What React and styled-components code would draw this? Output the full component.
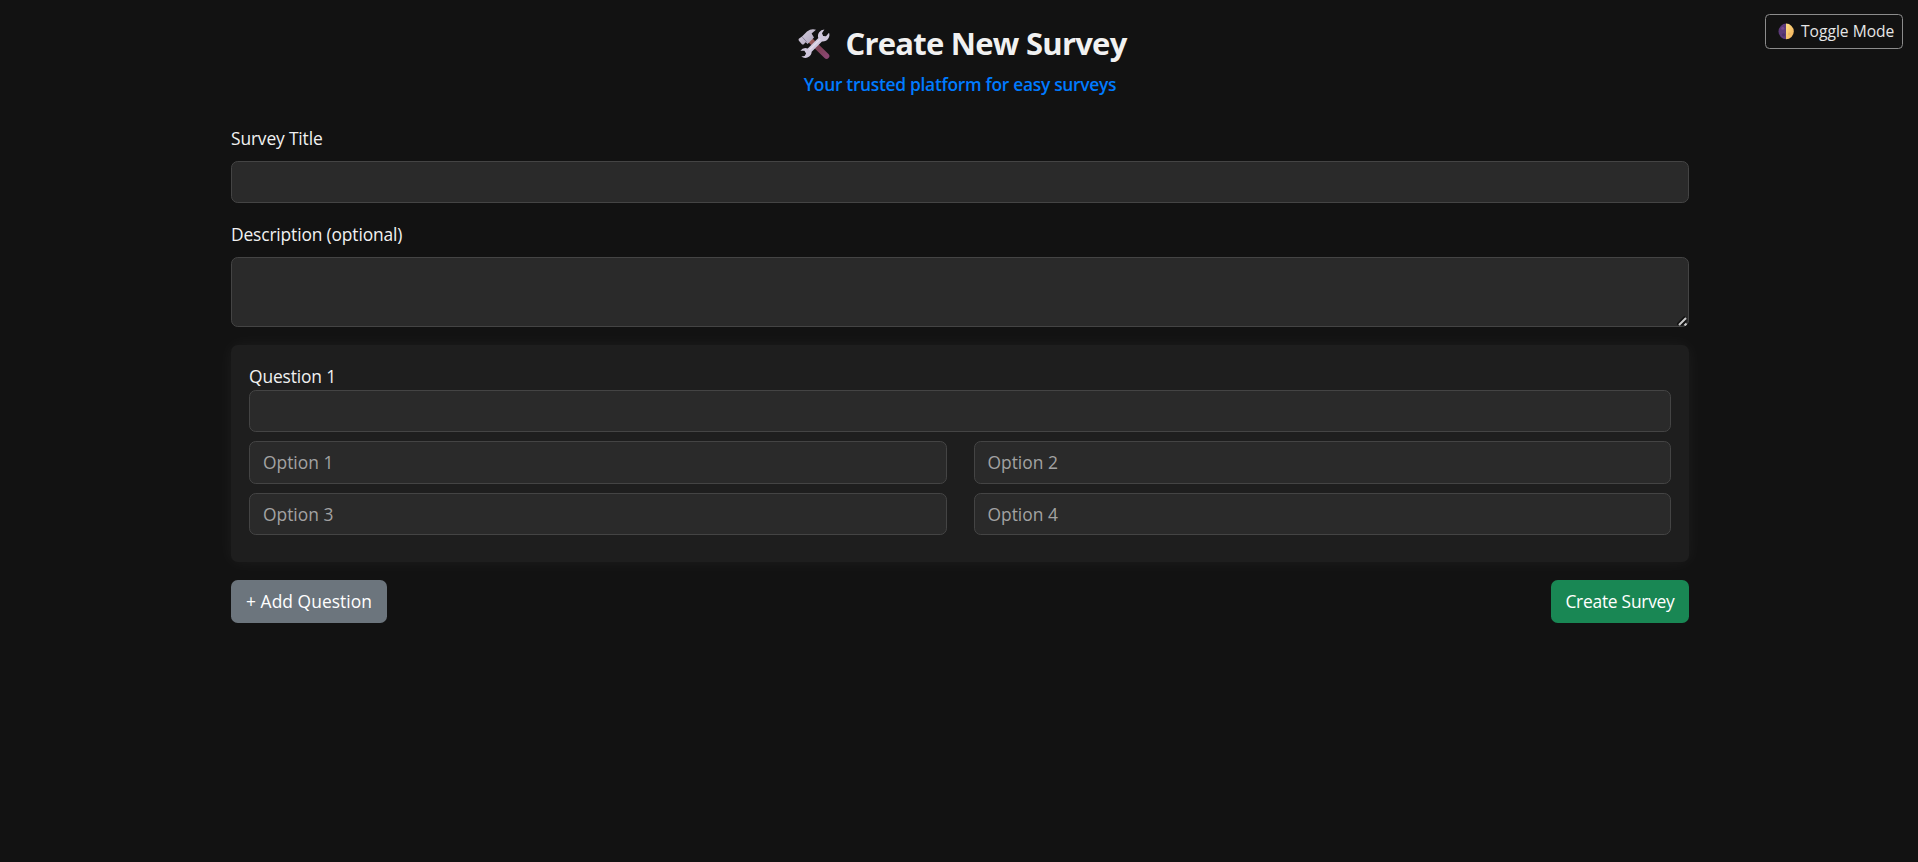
import React from "react";
import styled, { createGlobalStyle } from "styled-components";

const GlobalStyle = createGlobalStyle`
  *, *::before, *::after { box-sizing: border-box; }
  body {
    margin: 0;
    background: #121212;
    color: #f1f1f1;
    font-family: "Open Sans", "Noto Sans", sans-serif;
    font-size: 17.4px;
    line-height: 27px;
  }
`;

const Page = styled.main`
  position: relative;
  width: 1920px;
  max-width: 100vw;
  height: 862px;
  overflow: hidden;
`;

const Container = styled.div`
  width: 1458px;
  margin-left: 231px;
  padding-top: 24.7px;
`;

const Header = styled.header`
  display: flex;
  flex-direction: column;
  align-items: center;
  height: 100px;
`;

const Heading = styled.h1`
  display: flex;
  align-items: center;
  margin: 0;
  padding-left: 5px;
  height: 36px;
  font-size: 31px;
  font-weight: 700;
  line-height: 36px;
  letter-spacing: -0.75px;
  white-space: nowrap;
  gap: 15px;

  svg { margin-top: 2px; }
`;

const Tagline = styled.p`
  margin: 10px 0 0;
  color: #007bff;
  font-weight: 600;
  font-size: 17.4px;
  letter-spacing: -0.3px;
  line-height: 27px;
  white-space: nowrap;
`;

const ToggleButton = styled.button`
  position: absolute;
  top: 14px;
  right: 15px;
  display: flex;
  align-items: center;
  gap: 7px;
  width: 138px;
  height: 35px;
  padding: 0 0 1px 12px;
  border: 1px solid #8c8c8c;
  border-radius: 4.5px;
  background: transparent;
  color: #e6e6e6;
  font: 400 15.6px/24px "Open Sans", "Noto Sans", sans-serif;
  letter-spacing: 0;
  white-space: nowrap;
`;

const Field = styled.div`
  display: flex;
  flex-direction: column;
  gap: 9px;
  margin-bottom: 18px;
`;

const Label = styled.label`
  display: block;
  height: 27px;
  letter-spacing: -0.15px;
  white-space: nowrap;
`;

const controlStyles = `
  display: block;
  width: 100%;
  margin: 0;
  padding: 0 13px;
  border: 1px solid #444;
  border-radius: 6.75px;
  outline: none;
  background: #2a2a2a;
  color: #f1f1f1;
  font: 400 17.4px/27px "Open Sans", "Noto Sans", sans-serif;
  letter-spacing: 0;
`;

const Input = styled.input`
  ${controlStyles}
  height: 42.5px;
  &::placeholder { color: #a2a2a2; opacity: 1; }
`;

const TextAreaWrap = styled.div`
  position: relative;
  height: 69.5px;
`;

const TextArea = styled.textarea`
  ${controlStyles}
  height: 69.5px;
  resize: none;
`;

const Grip = styled.svg`
  position: absolute;
  right: 2px;
  bottom: 1px;
  pointer-events: none;
`;

const Card = styled.section`
  height: 217.5px;
  padding: 18px;
  border-radius: 6.75px;
  background: #1e1e1e;
  box-shadow: 0 0 17px rgba(255, 255, 255, 0.05);
`;

const Options = styled.div`
  display: grid;
  grid-template-columns: 1fr 1fr;
  gap: 9px 27px;
  margin-top: 9px;
`;

const Actions = styled.div`
  display: flex;
  justify-content: space-between;
  margin-top: 18px;
`;

const Button = styled.button`
  width: ${(p) => p.$width};
  height: 42.5px;
  padding: 0;
  border: 0;
  border-radius: 6.75px;
  background: ${(p) => p.$color};
  color: #fff;
  font: 400 17.4px/27px "Open Sans", "Noto Sans", sans-serif;
  letter-spacing: ${(p) => p.$tracking};
  white-space: nowrap;
`;

function ToolsIcon() {
  return (
    <svg width="32" height="32" viewBox="0 0 32 32" aria-hidden="true">
      <defs>
        <linearGradient id="handle" x1="0" y1="0" x2="1" y2="1">
          <stop offset="0" stopColor="#a05f58" />
          <stop offset="0.5" stopColor="#7c4053" />
          <stop offset="1" stopColor="#8a4670" />
        </linearGradient>
        <linearGradient id="steel" x1="0" y1="0" x2="1" y2="1">
          <stop offset="0" stopColor="#d9d2e2" />
          <stop offset="1" stopColor="#aaa0b8" />
        </linearGradient>
      </defs>
      <path d="M12 12 L28.5 28" stroke="url(#handle)" strokeWidth="5.6" strokeLinecap="round" />
      <path
        d="M.8 10.8 4 8.4 9 3.4Q13.5.2 18 1.8L13.6 5.4 16 9.6 9.6 16 7.7 14.3 5.8 16.2Q4.7 17 3.7 15.9L.9 12.8Q.2 11.6.8 10.8Z"
        fill="url(#steel)"
      />
      <path d="M4.3 9.1 9 14.2" stroke="#9187a1" strokeWidth="1" />
      <path
        d="M26.4 1.4A6.6 6.6 0 0 0 20.3 10.1L9.7 20.4A6.4 6.4 0 0 0 2.4 22.8L6.4 22.7 8.1 25.4 6.6 28 3.3 28.5A6.4 6.4 0 0 0 13.7 23.8L24 13.4A6.5 6.5 0 0 0 31 4.7L28 8.3 25.2 8 24 5.3Z"
        fill="#cfc7dc"
      />
      <path d="M11.2 22.2 22.2 11.2" stroke="#e5deec" strokeWidth="1.2" />
    </svg>
  );
}

function MoonIcon() {
  return (
    <svg width="16" height="17" viewBox="0 0 16 17" aria-hidden="true">
      <defs>
        <linearGradient id="lit" x1="0" y1="0" x2="1" y2="1">
          <stop offset="0" stopColor="#ffe087" />
          <stop offset="1" stopColor="#f2ad57" />
        </linearGradient>
      </defs>
      <path d="M8.3.6A7.8 7.8 0 0 0 8.3 16.2Z" fill="#5c3a79" />
      <path d="M8 .6A7.8 7.8 0 0 1 8 16.2Z" fill="url(#lit)" />
      <circle cx="4.7" cy="5.2" r="1.5" fill="#75498c" />
      <circle cx="5.5" cy="11.8" r="1.6" fill="#4c316a" />
      <circle cx="11.3" cy="10.9" r="1.3" fill="#efb764" />
    </svg>
  );
}

export default function App() {
  return (
    <>
      <GlobalStyle />
      <Page>
        <Container>
          <Header>
            <Heading>
              <ToolsIcon />
              <span>Create New Survey</span>
            </Heading>
            <Tagline>Your trusted platform for easy surveys</Tagline>
          </Header>
          <Field>
            <Label htmlFor="title">Survey Title</Label>
            <Input id="title" />
          </Field>
          <Field>
            <Label htmlFor="description">Description (optional)</Label>
            <TextAreaWrap>
              <TextArea id="description" />
              <Grip width="10" height="10" viewBox="0 0 10 10" aria-hidden="true">
                <path d="M0 8.5 8 .5" stroke="#111" strokeWidth="1.8" />
                <path d="M2 9 9 2M7.5 9.5 9.5 7.5" stroke="#c8c8c8" strokeWidth="2" />
                <path d="M4.5 9.5 9.5 4.5" stroke="#111" strokeWidth="1.4" />
              </Grip>
            </TextAreaWrap>
          </Field>
          <Card>
            <Label htmlFor="question">Question 1</Label>
            <Input id="question" />
            <Options>
              {[1, 2, 3, 4].map((n) => (
                <Input key={n} placeholder={`Option ${n}`} />
              ))}
            </Options>
          </Card>
          <Actions>
            <Button $width="156px" $color="#6c757d" $tracking="0.05px">+ Add Question</Button>
            <Button $width="138px" $color="#198754" $tracking="-0.25px">Create Survey</Button>
          </Actions>
        </Container>
        <ToggleButton>
          <MoonIcon />
          <span>Toggle Mode</span>
        </ToggleButton>
      </Page>
    </>
  );
}
